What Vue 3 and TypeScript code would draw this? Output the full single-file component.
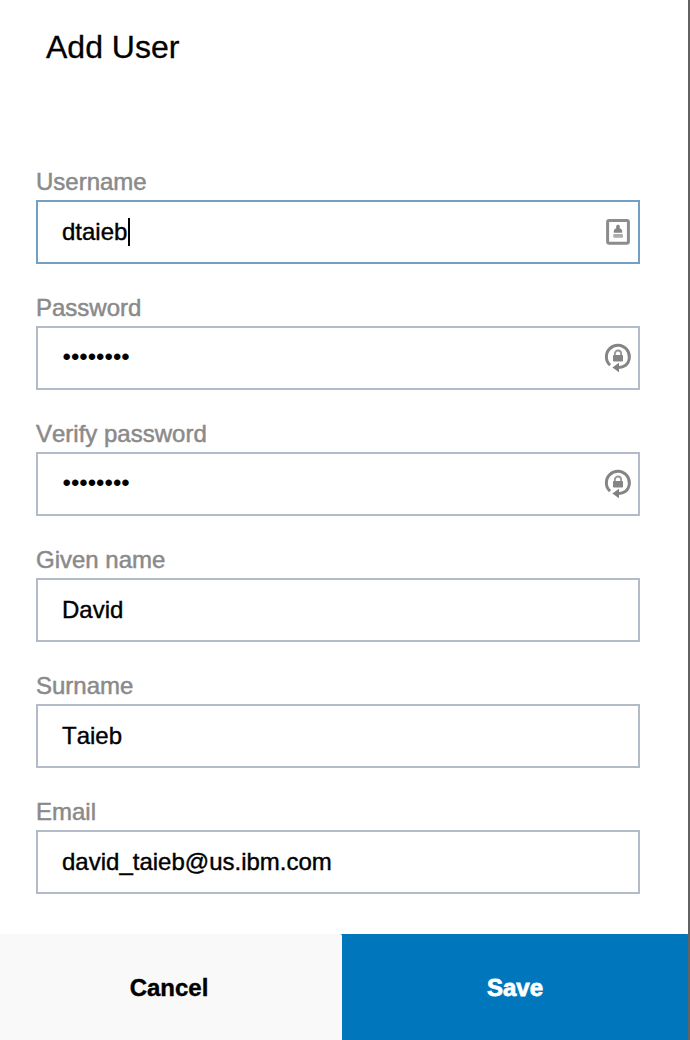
<script setup lang="ts">
interface Field {
  label: string
  value: string
  focused?: boolean
  secret?: boolean
  icon?: 'card' | 'lock'
}

const fields: Field[] = [
  { label: 'Username', value: 'dtaieb', focused: true, icon: 'card' },
  { label: 'Password', value: '••••••••', secret: true, icon: 'lock' },
  { label: 'Verify password', value: '••••••••', secret: true, icon: 'lock' },
  { label: 'Given name', value: 'David' },
  { label: 'Surname', value: 'Taieb' },
  { label: 'Email', value: 'david_taieb@us.ibm.com' },
]
</script>

<template>
  <main class="dialog">
    <h1 class="title">Add User</h1>
    <form class="form">
      <div v-for="field in fields" :key="field.label" class="field">
        <label class="label">{{ field.label }}</label>
        <div class="box" :class="{ focused: field.focused }">
          <span class="value" :class="{ secret: field.secret }">{{ field.value }}</span>
          <span v-if="field.focused" class="caret"></span>
          <svg v-if="field.icon === 'card'" class="icon" width="28" height="30" viewBox="0 0 28 30">
            <rect x="3.6" y="3.6" width="20.8" height="22.6" rx="1.5" fill="none" stroke="#8c8c8c" stroke-width="3" />
            <path d="M12.2 11.2V9.4c0-2.2 3.6-2.2 3.6 0v1.8c1.2.4 2.4 1.4 2.4 3v1.6H9.8v-1.6c0-1.6 1.2-2.6 2.4-3z" fill="#858585" />
            <rect x="9.2" y="17" width="9.8" height="3.8" rx="1" fill="#adadad" />
          </svg>
          <svg v-else-if="field.icon === 'lock'" class="icon" width="28" height="30" viewBox="0 0 28 30">
            <path d="M6.1 22.2A11.5 11.5 0 1 1 21.2 22.6Q18.6 24.3 15 24.6" fill="none" stroke="#858585" stroke-width="3" />
            <path d="M8.4 24.5L15 19.8V29.2z" fill="#808080" />
            <path d="M10.9 12.6v-2a3.1 3.1 0 0 1 6.2 0v2" fill="none" stroke="#969696" stroke-width="1.8" />
            <rect x="9" y="11.9" width="10" height="6.7" rx="0.8" fill="#858585" />
          </svg>
        </div>
      </div>
    </form>
    <footer class="actions">
      <button class="button cancel" type="button">Cancel</button>
      <button class="button save" type="button">Save</button>
    </footer>
  </main>
</template>

<style>
body {
  margin: 0;
  background: #fff;
}
</style>

<style scoped>
.dialog {
  box-sizing: border-box;
  width: 690px;
  height: 1040px;
  display: flex;
  flex-direction: column;
  border-right: 2px solid #626262;
  background: #fff;
  color: #000;
  font-family: "Liberation Sans", Arial, sans-serif;
  font-size: 24px;
  font-kerning: none;
  overflow: hidden;
}
.title {
  margin: 0;
  padding: 28px 0 0 46px;
  height: 138px;
  box-sizing: border-box;
  font-size: 32px;
  font-weight: 400;
  line-height: 38px;
  -webkit-text-stroke: 0.3px currentColor;
}
.form {
  flex: 1;
  padding: 28px 48px 0 36px;
}
.field {
  height: 126px;
}
.label {
  display: block;
  height: 34px;
  line-height: 32px;
  color: #8a8a8a;
  -webkit-text-stroke: 0.5px currentColor;
}
.box {
  box-sizing: border-box;
  height: 64px;
  display: flex;
  align-items: center;
  padding: 0 6px 0 24px;
  border: 2px solid #b3bac8;
}
.box.focused {
  border-color: #729fc3;
}
.value {
  line-height: 28px;
  -webkit-text-stroke: 0.4px currentColor;
}
.value.secret {
  padding: 0 0 2px 0.5px;
  -webkit-text-stroke: 0;
}
.caret {
  width: 2px;
  height: 28px;
  margin-left: 1px;
  background: #000;
}
.icon {
  margin-left: auto;
  filter: blur(0.6px);
}
.actions {
  display: flex;
  height: 106px;
  background: linear-gradient(90deg, #f9f9f9 338px, #707070 338px);
}
.button {
  border: 0;
  padding: 1px 0 0;
  font: bold 24px/28px "Liberation Sans", Arial, sans-serif;
  -webkit-text-stroke: 0.4px currentColor;
}
.cancel {
  width: 342px;
  padding-right: 4px;
  border-top-right-radius: 2px;
  background: #f9f9f9;
  color: #000;
}
.save {
  flex: 1;
  border-top-right-radius: 2px;
  background: #0077bd;
  color: #fff;
  -webkit-text-stroke-width: 0.8px;
}
</style>
